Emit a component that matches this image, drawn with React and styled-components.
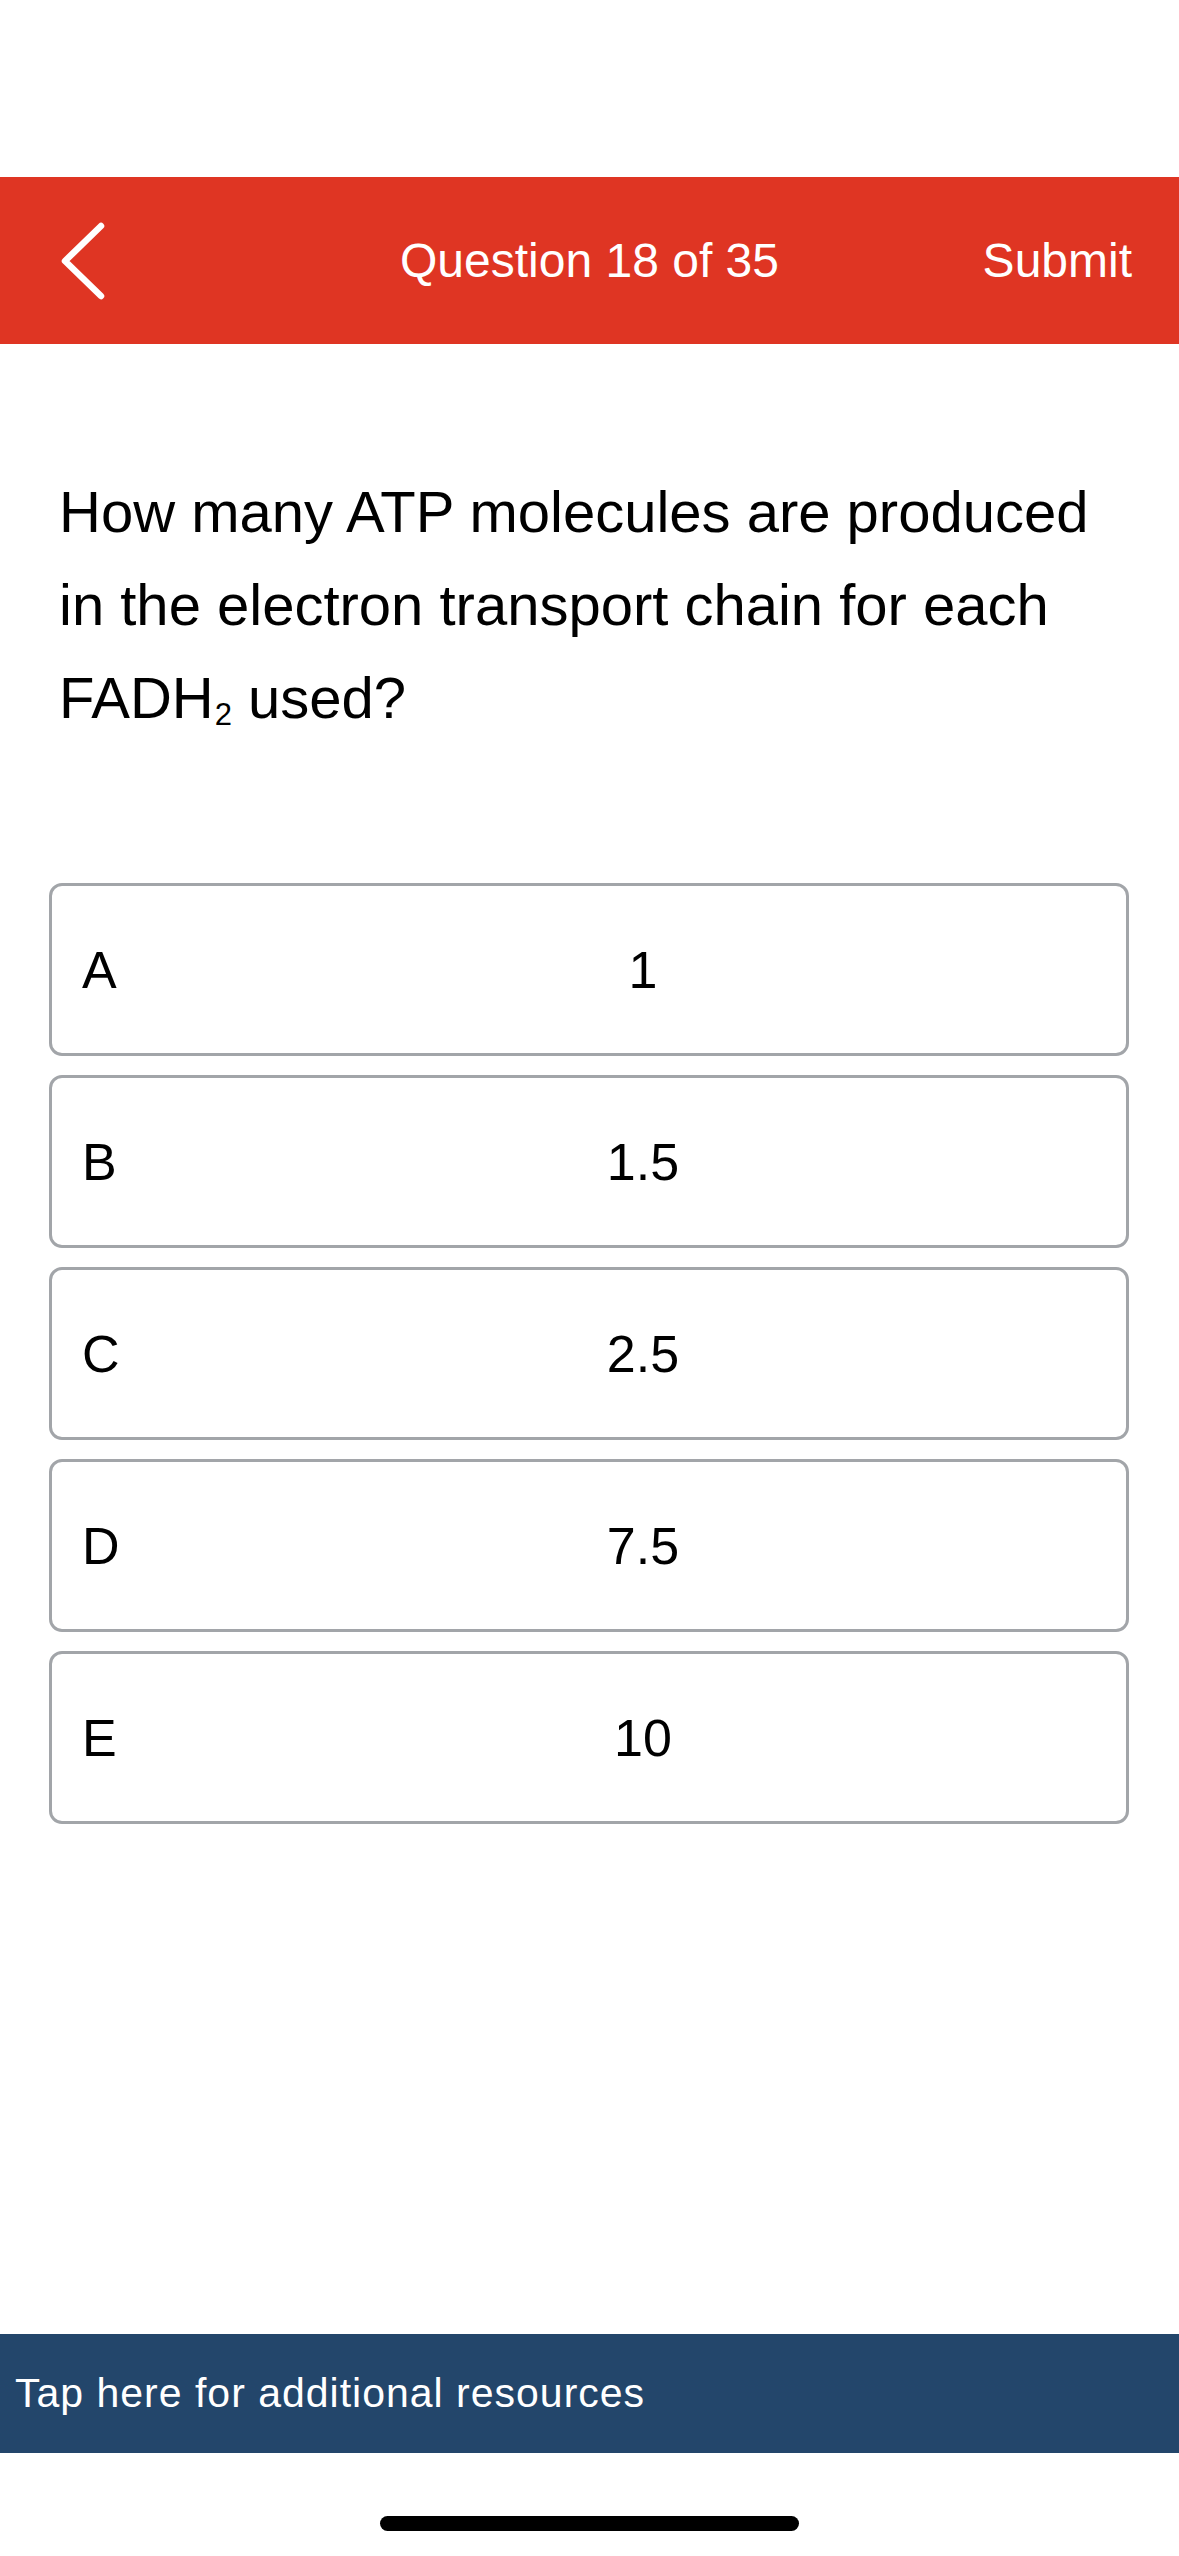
import React from "react";
import styled, { createGlobalStyle } from "styled-components";

const GlobalStyle = createGlobalStyle`
  html, body {
    margin: 0;
    padding: 0;
    background: #ffffff;
  }
  body {
    font-family: "Liberation Sans", Arial, sans-serif;
    color: #000000;
  }
`;

const options = [
  { letter: "A", value: "1" },
  { letter: "B", value: "1.5" },
  { letter: "C", value: "2.5" },
  { letter: "D", value: "7.5" },
  { letter: "E", value: "10" },
];

const App = () => {
  return (
    <Page>
      <GlobalStyle />
      <Header>
        <BackButton aria-label="Back">
          <svg width="46" height="78" viewBox="0 0 46 78">
            <polyline
              points="41,4 5,39 41,74"
              fill="none"
              stroke="#ffffff"
              strokeWidth="6.5"
              strokeLinecap="round"
              strokeLinejoin="round"
            />
          </svg>
        </BackButton>
        <Title>Question 18 of 35</Title>
        <SubmitButton>Submit</SubmitButton>
      </Header>

      <Main>
        <Question>
          How many ATP molecules are produced in the electron transport chain
          for each FADH<Sub>2</Sub> used?
        </Question>

        <OptionList>
          {options.map((opt) => (
            <Option key={opt.letter}>
              <Letter>{opt.letter}</Letter>
              <Value>{opt.value}</Value>
            </Option>
          ))}
        </OptionList>
      </Main>

      <Footer>Tap here for additional resources</Footer>

      <HomeArea>
        <HomeIndicator />
      </HomeArea>
    </Page>
  );
};

const Page = styled.div`
  min-height: 2556px;
  display: flex;
  flex-direction: column;
  padding-top: 177px;
  box-sizing: border-box;
`;

const Header = styled.header`
  height: 167px;
  background: #df3523;
  display: grid;
  grid-template-columns: 1fr auto 1fr;
  align-items: center;
  color: #ffffff;
`;

const BackButton = styled.div`
  padding-left: 60px;
  display: flex;
  align-items: center;
  height: 78px;
`;

const Title = styled.div`
  font-size: 48px;
  line-height: 1;
  text-align: center;
`;

const SubmitButton = styled.div`
  justify-self: end;
  padding-right: 47px;
  font-size: 48px;
  line-height: 1;
`;

const Main = styled.main`
  flex: 1;
  padding-top: 121px;
`;

const Question = styled.p`
  margin: 0;
  padding: 0 60px 0 59px;
  font-size: 58px;
  line-height: 93px;
`;

const Sub = styled.span`
  font-size: 31px;
  line-height: 0;
  vertical-align: -7px;
  margin-left: 1px;
`;

const OptionList = styled.div`
  margin-top: 139px;
  padding: 0 50px 0 49px;
  display: flex;
  flex-direction: column;
  gap: 19px;
`;

const Option = styled.div`
  height: 173px;
  box-sizing: border-box;
  border: 3px solid #a2a5a9;
  border-radius: 13px;
  display: flex;
  align-items: center;
  font-size: 52px;
`;

const Letter = styled.div`
  width: 78px;
  padding-left: 30px;
`;

const Value = styled.div`
  flex: 1;
  text-align: center;
`;

const Footer = styled.footer`
  height: 119px;
  background: #23466b;
  color: #ffffff;
  display: flex;
  align-items: center;
  padding-left: 15px;
  font-size: 41px;
  letter-spacing: 1px;
`;

const HomeArea = styled.div`
  height: 103px;
  padding-top: 63px;
  box-sizing: border-box;
  display: flex;
  justify-content: center;
`;

const HomeIndicator = styled.div`
  width: 419px;
  height: 15px;
  border-radius: 8px;
  background: #000000;
`;

export default App;
